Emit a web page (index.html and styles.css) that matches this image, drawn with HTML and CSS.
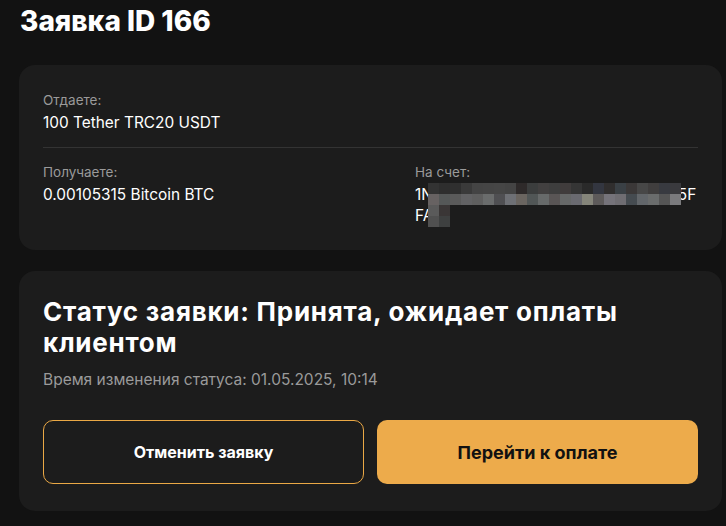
FILE: index.html
```html
<!DOCTYPE html>
<html>
<head>
  <meta charset="utf-8">
  <link rel="stylesheet" href="styles.css">
</head>
<body>
  <h1 class="page-title">Заявка ID 166</h1>

  <div class="card details">
    <div class="row">
      <div class="field">
        <div class="label">Отдаете:</div>
        <div class="value">100 Tether TRC20 USDT</div>
      </div>
    </div>
    <div class="divider"></div>
    <div class="row cols">
      <div class="field">
        <div class="label">Получаете:</div>
        <div class="value">0.00105315 Bitcoin BTC</div>
      </div>
      <div class="field">
        <div class="label">На счет:</div>
        <div class="value address">
          <div class="addr-line">1N<span class="hidden-part"></span>5F</div>
          <div class="addr-line">FA</div>
          <div class="mosaic">
            <div class="mosaic-row">
              <span style="background:#333"></span><span style="background:#2e2e2e"></span><span style="background:#2f2f2f"></span><span style="background:#3a3a3a"></span><span style="background:#444"></span><span style="background:#454545"></span><span style="background:#464646"></span><span style="background:#444"></span><span style="background:#2e2a2a"></span><span style="background:#3b3d3d"></span><span style="background:#424040"></span><span style="background:#3e3e3e"></span><span style="background:#403c3c"></span><span style="background:#353535"></span><span style="background:#2a2a2a"></span><span style="background:#333640"></span><span style="background:#302e2e"></span><span style="background:#3a4045"></span><span style="background:#3b3838"></span><span style="background:#474747"></span><span style="background:#403e3e"></span><span style="background:#383a40"></span><span style="background:#3a3a3e"></span>
            </div>
            <div class="mosaic-row">
              <span style="background:#676262"></span><span style="background:#555858"></span><span style="background:#5a5a5a"></span><span style="background:#626264"></span><span style="background:#5f5f5f"></span><span style="background:#6a6c6c"></span><span style="background:#4f4f52"></span><span style="background:#6e7075"></span><span style="background:#6a6560"></span><span style="background:#515656"></span><span style="background:#676a6a"></span><span style="background:#595555"></span><span style="background:#666868"></span><span style="background:#6a6a70"></span><span style="background:#85857a"></span><span style="background:#5d5a5a"></span><span style="background:#75737a"></span><span style="background:#6f6d72"></span><span style="background:#454b50"></span><span style="background:#62666a"></span><span style="background:#6a6c6c"></span><span style="background:#555555"></span><span style="background:#7a7a7d"></span>
            </div>
            <div class="mosaic-row">
              <span style="background:#5a5a5a"></span><span style="background:#3a3636"></span>
            </div>
            <div class="mosaic-row">
              <span style="background:#505050"></span><span style="background:#3e4040"></span>
            </div>
          </div>
        </div>
      </div>
    </div>
  </div>

  <div class="card status-card">
    <h2 class="status-title">Статус заявки: Принята, ожидает оплаты клиентом</h2>
    <div class="status-time">Время изменения статуса: 01.05.2025, 10:14</div>
    <div class="actions">
      <button class="btn btn-outline">Отменить заявку</button>
      <button class="btn btn-primary">Перейти к оплате</button>
    </div>
  </div>
</body>
</html>
```

FILE: styles.css
```css
body {
  margin: 0;
  padding: 4px 4px 0 19px;
  background: #121212;
  color: #fff;
  font-family: Inter, "Noto Sans", sans-serif;
}
.page-title {
  margin: 0 0 27px 1px;
  font-size: 28px;
  line-height: 34px;
  font-weight: 800;
}
.card {
  background: #1c1c1c;
  border-radius: 16px;
  padding: 0 24px;
}
.details {
  padding-top: 26px;
  padding-bottom: 24px;
  margin-bottom: 21px;
}
.field {
  display: flex;
  flex-direction: column;
  gap: 3px;
}
.label {
  font-size: 13.5px;
  line-height: 18px;
  color: #9a9a9a;
}
.value {
  font-size: 15.4px;
  line-height: 21px;
}
.divider {
  height: 1px;
  background: #333;
  margin: 14px 0 15px;
}
.cols {
  display: grid;
  grid-template-columns: 1fr 283px;
}
.address {
  position: relative;
}
.addr-line {
  white-space: nowrap;
}
.hidden-part {
  display: inline-block;
  width: 245px;
}
.mosaic {
  position: absolute;
  left: 13px;
  top: -1px;
}
.mosaic-row {
  display: flex;
}
.mosaic-row span {
  width: 11px;
  height: 11px;
}
.status-card {
  padding-top: 25px;
  padding-bottom: 27px;
}
.status-title {
  margin: 0 0 12px;
  font-size: 26px;
  line-height: 31px;
  font-weight: 700;
  letter-spacing: 0.75px;
}
.status-time {
  font-size: 15.5px;
  line-height: 20px;
  color: #9a9a9a;
  margin-bottom: 30px;
}
.actions {
  display: grid;
  grid-template-columns: 1fr 1fr;
  gap: 13px;
}
.btn {
  height: 64px;
  border-radius: 10px;
  font-family: Inter, sans-serif;
  font-weight: 700;
  cursor: pointer;
}
.btn-outline {
  background: transparent;
  border: 1px solid #eaa845;
  color: #fff;
  font-size: 16px;
}
.btn-primary {
  background: #edab4b;
  border: none;
  color: #111;
  font-size: 18px;
}
```
